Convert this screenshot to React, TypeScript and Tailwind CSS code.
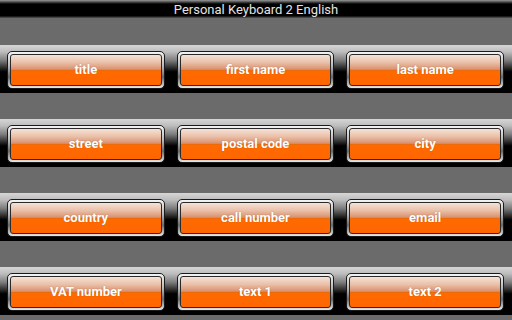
import React from 'react';

const rows = [
  ['title', 'first name', 'last name'],
  ['street', 'postal code', 'city'],
  ['country', 'call number', 'email'],
  ['VAT number', 'text 1', 'text 2'],
];

function Key({ label }: { label: string }) {
  return (
    <div className="h-[38px] rounded-[5px] border border-[#1a1a1a] bg-[linear-gradient(to_bottom,#f4f4f4_0%,#b8b8b8_40%,#6a6a6a_70%,#e8e8e8_100%)] p-[2px]">
      <div className="flex h-full items-center justify-center rounded-[3px] border border-[#2a2a2a] bg-[linear-gradient(to_bottom,#f6e2d8_0%,#eac0a8_25%,#d99070_48%,#e06a10_50%,#ff6a00_54%,#ff6600_100%)]">
        <span className="text-[13px] font-bold text-white [text-shadow:0_0_1px_rgba(120,50,0,0.5)]">{label}</span>
      </div>
    </div>
  );
}

export default function App() {
  return (
    <div className="flex h-[320px] w-[512px] flex-col overflow-hidden bg-[#6b6b6b] font-['Roboto',sans-serif]">
      <div className="flex h-[18px] items-center justify-center bg-[linear-gradient(to_bottom,#9a9a9a_0%,#000_22%,#000_88%,#5a5a5a_100%)]">
        <span className="text-[13px] leading-none text-[#e4e4e4]">Personal Keyboard 2 English</span>
      </div>
      <div className="flex flex-col gap-[26px] pt-[27px]">
        {rows.map((row, i) => (
          <div
            key={i}
            className="grid h-[48px] grid-cols-3 gap-[12px] bg-[linear-gradient(to_bottom,#d6d6d6_0%,#bdbdbd_14%,#7c7c7c_32%,#2a2a2a_48%,#000_56%,#000_100%)] pb-[4px] pl-[7px] pr-[8px] pt-[6px]"
          >
            {row.map((label) => (
              <Key key={label} label={label} />
            ))}
          </div>
        ))}
      </div>
    </div>
  );
}
